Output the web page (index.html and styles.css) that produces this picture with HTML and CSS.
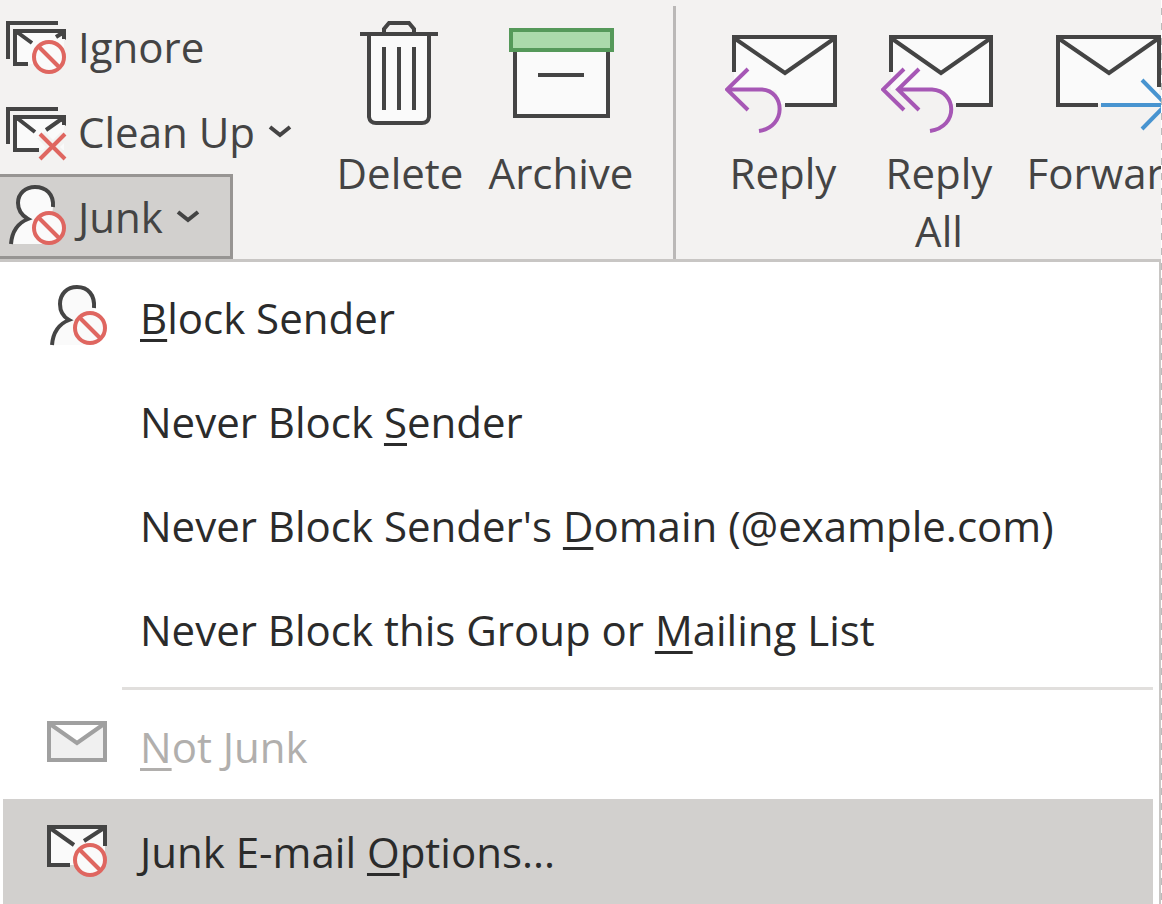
FILE: index.html
```
<!DOCTYPE html>
<html lang="en">
<head>
<meta charset="utf-8">
<title>Junk E-mail menu</title>
<link rel="stylesheet" href="styles.css">
</head>
<body>
<div class="window">
  <div class="ribbon" role="toolbar" aria-label="Message actions">
    <div class="stack">
      <button class="small" type="button">
        <svg class="icon" viewBox="0 14 72 64" aria-hidden="true">
          <path class="paper" d="M15 30H64V63H15Z"/>
          <path class="ink" d="M8 58V22H58"/>
          <path class="ink" d="M28 63H15V30H64V38M17 31L32 42M64 31L56 36"/>
          <path class="fill-ink" d="M14 28H26L14 36ZM66 28H54L66 39Z"/>
          <circle class="halo" cx="49" cy="56" r="17"/>
          <circle class="ban" cx="49" cy="56" r="15"/><path class="ban-line" d="M38 45L60 67"/>
        </svg>
        <span>Ignore</span>
      </button>
      <button class="small" type="button">
        <svg class="icon" viewBox="0 99 72 64" aria-hidden="true">
          <path class="paper" d="M15 115H64V149H15Z"/>
          <path class="ink" d="M8 143V108H58"/>
          <path class="ink" d="M39 149H15V116H64V124M17 117L35 131M63 117L46 129"/>
          <path class="fill-ink" d="M14 114H26L14 122ZM66 114H54L66 125Z"/>
          <path class="halo-line" d="M41 134L65 158M65 134L41 158"/>
          <path class="cross" d="M40 133L65 158M65 133L40 158"/>
        </svg>
        <span>Clean Up</span>
        <svg class="chevron" viewBox="0 0 24 14" aria-hidden="true"><path class="ink" d="M2 2L12 10L22 2"/></svg>
      </button>
      <button class="small open" type="button" aria-haspopup="menu" aria-expanded="true">
        <svg class="icon" viewBox="0 185 72 64" aria-hidden="true">
          <path class="paper" d="M11 244C12 231 18 223 28 220C14 211 15 186 35 186C49 186 53 196 53 207L49 244Z"/>
          <path class="person" d="M11 244C12 231 18 223 28 219C21 215 18 209 18 203C18 193 26 187 35 187C46 187 54 194 53 207"/>
          <circle class="ban" cx="49" cy="228" r="15"/><path class="ban-line" d="M38 217L60 239"/>
        </svg>
        <span>Junk</span>
        <svg class="chevron" viewBox="0 0 24 14" aria-hidden="true"><path class="ink" d="M2 2L12 10L22 2"/></svg>
      </button>
    </div>
    <button class="large" type="button">
      <svg class="picture" viewBox="344 18 112 116" aria-hidden="true">
        <path class="paper" d="M369 34H429V117L423 123H375L369 117Z"/>
        <path class="ink" d="M369 34V117Q370 123 376 123H422Q428 123 429 117V34M360 34H438M384 33V29L389 23H409L414 29V33M384 47V110M399 47V110M414 47V110"/>
      </svg>
      <span>Delete</span>
    </button>
    <button class="large archive" type="button">
      <svg class="picture" viewBox="505 18 112 116" aria-hidden="true">
        <path class="box" d="M515 45V116H608V45ZM538 75H584"/>
        <path class="lid" d="M511 30H612V50H511Z"/>
      </svg>
      <span>Archive</span>
    </button>
    <div class="divider"></div>
    <button class="large" type="button">
      <svg class="picture" viewBox="725 18 116 116" aria-hidden="true">
        <path class="paper" d="M734 37H835V104H780L776 90H734Z"/>
        <path class="ink" d="M734 72V37H835V105H785M734 38L785 73L835 38"/>
        <path class="reply" d="M748 69L727 89.500L748 110M728 89.500H762C785 91 787 127 759 131"/>
      </svg>
      <span>Reply</span>
    </button>
    <button class="large" type="button">
      <svg class="picture" viewBox="881 18 116 116" aria-hidden="true">
        <path class="paper" d="M891 37H991V104H950L944 90H891Z"/>
        <path class="ink" d="M891 72V37H991V105H956M891 38L941 73L991 38"/>
        <path class="reply" d="M904 69L883 89.500L904 110M919 69L898 89.500L919 110M899 89.500H932C957 91 959 127 930 131"/>
      </svg>
      <span>Reply<br>All</span>
    </button>
    <button class="large forward" type="button">
      <svg class="picture" viewBox="1050 18 116 116" aria-hidden="true">
        <path class="paper" d="M1058 37H1159V104H1058Z"/>
        <path class="ink" d="M1098 105H1058V37H1159V87M1058 38L1109 73L1159 38"/>
        <path class="arrow" d="M1101 105H1164M1142 80L1166 104.500L1142 129"/>
      </svg>
      <span>Forward</span>
    </button>
  </div>

  <div class="menu" role="menu" aria-label="Junk">
    <button class="item" type="button" role="menuitem">
      <svg class="glyph" viewBox="44 284 72 68" aria-hidden="true">
        <path class="paper" d="M52 345C53 331 59 324 69 321C55 311 56 287 76 287C90 287 94 297 94 308L90 345Z"/>
        <path class="person" d="M52 345C53 332 59 324 69 320C62 316 60 310 60 304C60 294 67 287 77 287C88 287 95 295 94 308"/>
        <circle class="ban" cx="90" cy="328" r="15"/><path class="ban-line" d="M79 317L101 339"/>
      </svg>
      <span><u>B</u>lock Sender</span>
    </button>
    <button class="item" type="button" role="menuitem"><span class="glyph"></span><span>Never Block <u>S</u>ender</span></button>
    <button class="item" type="button" role="menuitem"><span class="glyph"></span><span>Never Block Sender's <u>D</u>omain (@example.com)</span></button>
    <button class="item" type="button" role="menuitem"><span class="glyph"></span><span>Never Block this Group or <u>M</u>ailing List</span></button>
    <div class="separator" role="separator"></div>
    <button class="item" type="button" role="menuitem" disabled>
      <svg class="glyph" viewBox="44 713 72 68" aria-hidden="true">
        <path class="muted" d="M49 723H105V760H49ZM50 724L77 743L104 724"/>
      </svg>
      <span><u>N</u>ot Junk</span>
    </button>
    <button class="item selected" type="button" role="menuitem">
      <svg class="glyph" viewBox="44 818 72 68" aria-hidden="true">
        <path class="paper" d="M49 827H105V865H49Z"/>
        <path class="ink" d="M70 865H49V827H105V846M50 828L74 845M104 828L84 841"/>
        <circle class="ban" cx="90" cy="860" r="15"/><path class="ban-line" d="M79 849L101 871"/>
      </svg>
      <span>Junk E-mail <u>O</u>ptions...</span>
    </button>
  </div>
</div>
</body>
</html>
```
FILE: styles.css
```
* { box-sizing: border-box; }
body { margin: 0; background: #fff; }
button {
  margin: 0; padding: 0; border: 0; background: none; color: inherit;
  font: inherit; text-align: left;
}
svg { display: block; flex: none; fill: none; }

.window {
  position: relative;
  min-height: 100vh;
  display: flex;
  flex-direction: column;
  overflow: hidden;
  font: 42px/58px "Open Sans", "Noto Sans", sans-serif;
  color: #2b2b2b;
}
.window::before, .window::after { content: ""; position: absolute; z-index: 1; }
.window::before {
  top: 0; right: 0; bottom: 0; width: 1px;
  background: repeating-linear-gradient(#fff 0 8px, #bbb 8px 15px);
}
.window::after {
  left: 0; right: 0; bottom: 0; height: 1px;
  background: repeating-linear-gradient(90deg, #ccc 0 7px, #fff 7px 15px);
}

.ribbon {
  display: flex;
  height: 262px;
  overflow: hidden;
  background: #f3f2f1;
  border-bottom: 3px solid #c8c6c4;
  color: #444;
}
.stack { flex: none; width: 322px; padding-top: 4px; }
.small { display: flex; align-items: center; height: 85px; white-space: nowrap; }
.icon { width: 72px; height: 64px; margin-right: 6px; }
.chevron { width: 24px; height: 14px; margin-left: 13px; }
.open {
  width: 233px;
  background: #d2d0ce;
  border: 3px solid #979593;
  border-left: 0;
}
.large {
  flex: none;
  display: flex;
  flex-direction: column;
  align-items: center;
  gap: 10px;
  width: 156px;
  padding-top: 18px;
  text-align: center;
}
.archive { width: 166px; }
.forward { width: 182px; }
.picture { height: 116px; }
.divider { flex: none; width: 3px; margin: 6px 29px 0; background: #bab8b7; }

.menu { flex: 1; padding: 4px 6px 0 3px; border-right: 3px solid #c8c6c4; }
.item {
  display: flex;
  align-items: center;
  width: 100%;
  height: 104px;
  padding-left: 41px;
  white-space: nowrap;
}
.item:disabled { color: #b1afad; }
.selected { height: 106px; background: #d2d0ce; }
.glyph { flex: none; width: 72px; height: 68px; margin-right: 24px; }
.separator { height: 3px; margin: 5px 0 5px 119px; background: #e1dfdd; }
u { text-decoration-thickness: 3px; text-underline-offset: 5px; text-decoration-skip-ink: none; }

.paper { fill: #fafafa; }
.ink, .box { stroke: #444; stroke-width: 4; }
.box { fill: #fafafa; }
.fill-ink { fill: #444; }
.person { stroke: #444; stroke-width: 4; }
.ban { fill: #fafafa; stroke: #df6660; stroke-width: 4; }
.ban-line, .cross { stroke: #df6660; stroke-width: 4; }
.halo { fill: #f3f2f1; }
.halo-line { stroke: #f3f2f1; stroke-width: 10; }
.lid { fill: #abdaab; stroke: #55995a; stroke-width: 4; }
.reply { stroke: #a657b5; stroke-width: 4; }
.arrow { stroke: #4894d0; stroke-width: 4; }
.muted { fill: #f0f0f0; stroke: #a0a0a0; stroke-width: 4; }
```
